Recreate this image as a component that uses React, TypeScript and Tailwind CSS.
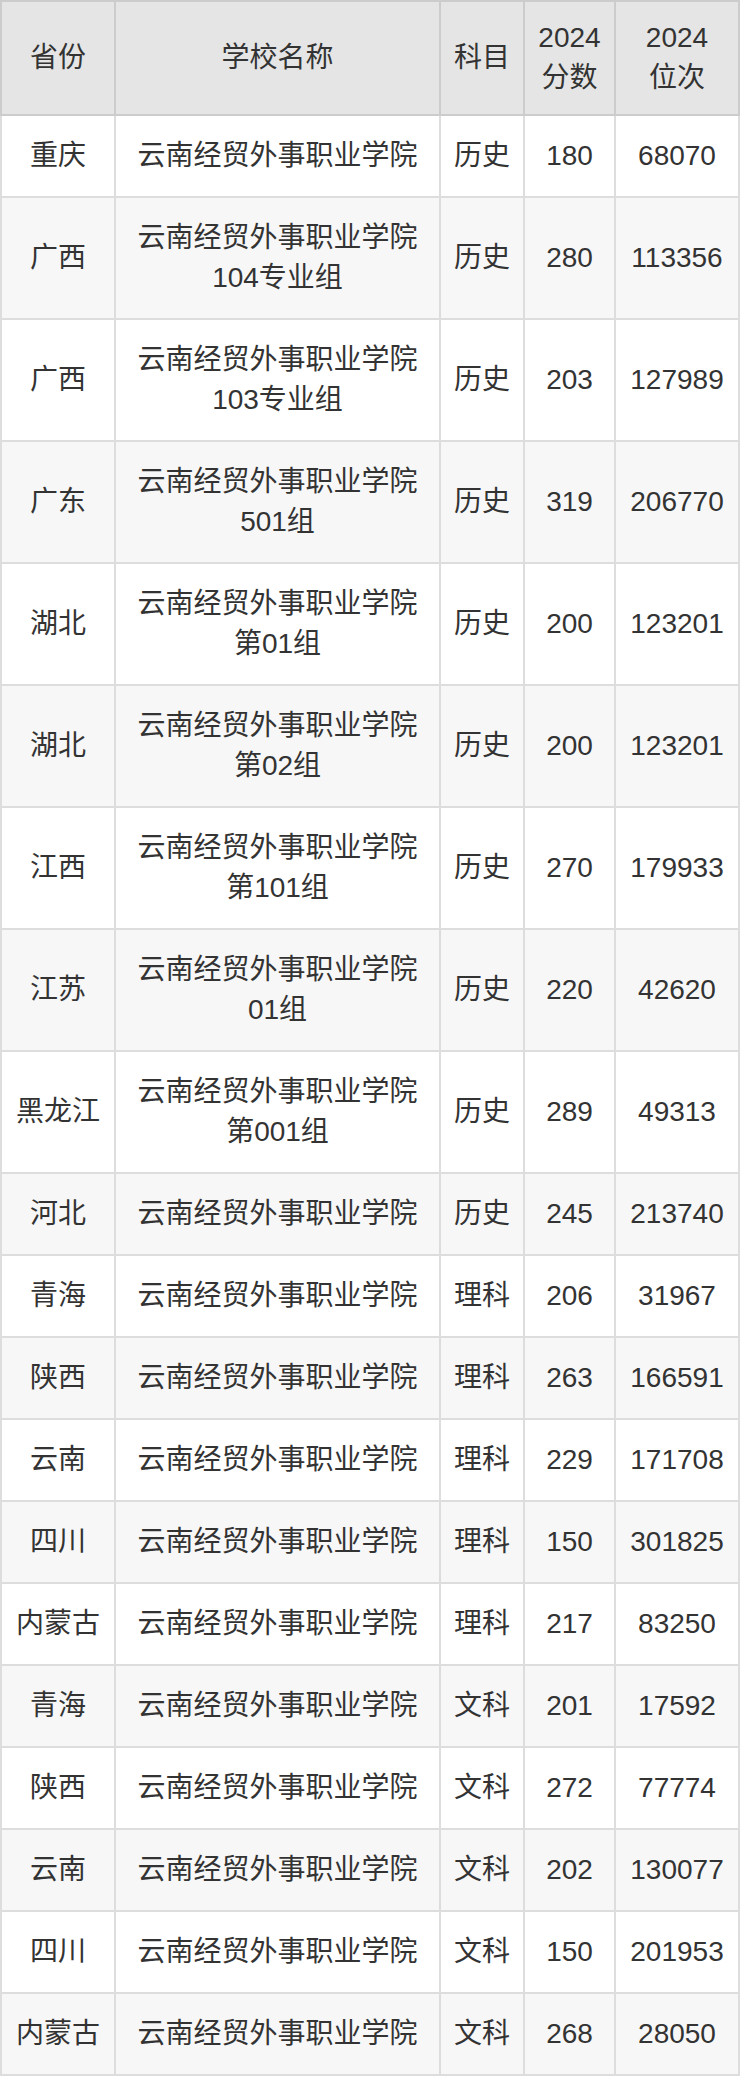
type Row = {
  province: string;
  school: string;
  group?: string;
  subject: string;
  score: number;
  rank: number;
};

const SCHOOL = '云南经贸外事职业学院';

const rows: Row[] = [
  { province: '重庆', school: SCHOOL, subject: '历史', score: 180, rank: 68070 },
  { province: '广西', school: SCHOOL, group: '104专业组', subject: '历史', score: 280, rank: 113356 },
  { province: '广西', school: SCHOOL, group: '103专业组', subject: '历史', score: 203, rank: 127989 },
  { province: '广东', school: SCHOOL, group: '501组', subject: '历史', score: 319, rank: 206770 },
  { province: '湖北', school: SCHOOL, group: '第01组', subject: '历史', score: 200, rank: 123201 },
  { province: '湖北', school: SCHOOL, group: '第02组', subject: '历史', score: 200, rank: 123201 },
  { province: '江西', school: SCHOOL, group: '第101组', subject: '历史', score: 270, rank: 179933 },
  { province: '江苏', school: SCHOOL, group: '01组', subject: '历史', score: 220, rank: 42620 },
  { province: '黑龙江', school: SCHOOL, group: '第001组', subject: '历史', score: 289, rank: 49313 },
  { province: '河北', school: SCHOOL, subject: '历史', score: 245, rank: 213740 },
  { province: '青海', school: SCHOOL, subject: '理科', score: 206, rank: 31967 },
  { province: '陕西', school: SCHOOL, subject: '理科', score: 263, rank: 166591 },
  { province: '云南', school: SCHOOL, subject: '理科', score: 229, rank: 171708 },
  { province: '四川', school: SCHOOL, subject: '理科', score: 150, rank: 301825 },
  { province: '内蒙古', school: SCHOOL, subject: '理科', score: 217, rank: 83250 },
  { province: '青海', school: SCHOOL, subject: '文科', score: 201, rank: 17592 },
  { province: '陕西', school: SCHOOL, subject: '文科', score: 272, rank: 77774 },
  { province: '云南', school: SCHOOL, subject: '文科', score: 202, rank: 130077 },
  { province: '四川', school: SCHOOL, subject: '文科', score: 150, rank: 201953 },
  { province: '内蒙古', school: SCHOOL, subject: '文科', score: 268, rank: 28050 },
];

const th = 'border-2 border-[#cccccc] px-1 py-4 font-normal';
const td = 'border-2 border-[#dddddd] px-1 py-5';

export default function App() {
  return (
    <div className="w-[740px] bg-white">
      <table
        className="w-[740px] table-fixed border-collapse text-center text-[28px] leading-[40px] text-[#333333]"
        style={{ fontFamily: '"Liberation Sans", "Noto Sans CJK SC", sans-serif' }}
      >
        <colgroup>
          <col className="w-[114px]" />
          <col className="w-[325px]" />
          <col className="w-[84px]" />
          <col className="w-[91px]" />
          <col className="w-[124px]" />
        </colgroup>
        <thead className="bg-[#e5e5e5]">
          <tr>
            <th className={th}>省份</th>
            <th className={th}>学校名称</th>
            <th className={th}>科目</th>
            <th className={th}>
              2024
              <br />
              分数
            </th>
            <th className={th}>
              2024
              <br />
              位次
            </th>
          </tr>
        </thead>
        <tbody>
          {rows.map((r, i) => (
            <tr key={i} className={i % 2 === 1 ? 'bg-[#f7f7f7]' : 'bg-white'}>
              <td className={`${td} whitespace-nowrap`}>{r.province}</td>
              <td className={td}>
                <div className="whitespace-nowrap">{r.school}</div>
                {r.group && <div className="whitespace-nowrap">{r.group}</div>}
              </td>
              <td className={`${td} whitespace-nowrap`}>{r.subject}</td>
              <td className={td}>{r.score}</td>
              <td className={td}>{r.rank}</td>
            </tr>
          ))}
        </tbody>
      </table>
    </div>
  );
}
